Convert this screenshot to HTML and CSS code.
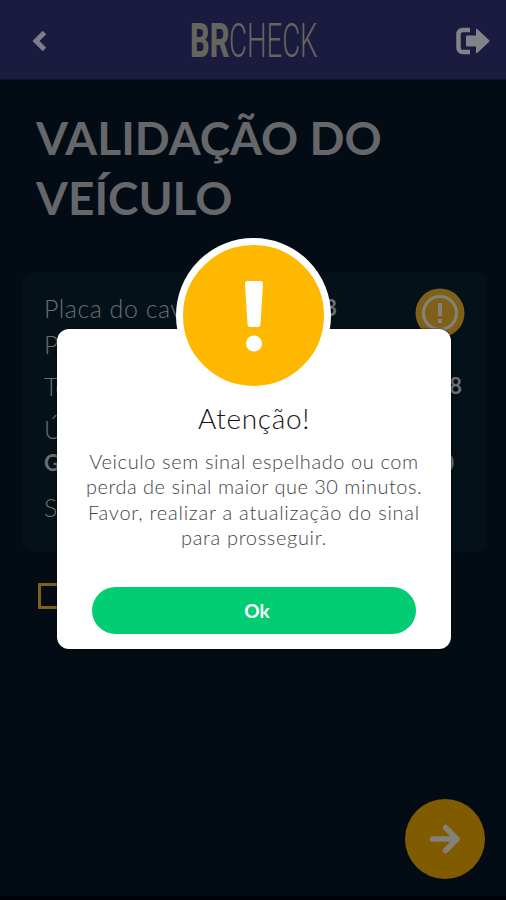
FILE: index.html
```html
<!DOCTYPE html>
<html lang="pt-BR">
<head>
<meta charset="utf-8">
<title>BRCheck</title>
<link rel="stylesheet" href="styles.css">
</head>
<body>
<div class="screen">
  <header class="topbar">
    <svg class="back" width="18" height="24" viewBox="0 0 18 24"><path d="M13.500 3.500 5 12l8.500 8.500" fill="none" stroke="#7d7e88" stroke-width="5"/></svg>
    <div class="logo"><span class="logo-br">BR</span><span class="logo-check">CHECK</span></div>
    <svg class="exit" width="36" height="28" viewBox="0 0 36 28"><path d="M15 3H7.500a4 4 0 0 0-4 4v14a4 4 0 0 0 4 4H15" fill="none" stroke="#82828a" stroke-width="4.500"/><path d="M11 9.500q0-1 1-1h9V3q0-2 1.500-.8L34 13q1 1 0 2L22.500 25.800Q21 27 21 25v-5.500h-9q-1 0-1-1z" fill="#82828a"/></svg>
  </header>
  <main class="content">
    <h1 class="title">VALIDAÇÃO DO<br>VEÍCULO</h1>
    <section class="card">
      <div class="row row-plate"><span>Placa do cav</span><b class="plate-end">3</b>
        <svg class="warn" width="50" height="50" viewBox="0 0 50 50"><circle cx="25" cy="25" r="24.500" fill="#806018"/><circle cx="25" cy="25" r="16.500" fill="none" stroke="#85827b" stroke-width="3"/><path d="M25 15v13M25 31v4" stroke="#85827b" stroke-width="4"/></svg>
      </div>
      <div class="row row-p">P</div>
      <div class="row row-t"><span>Te</span><b>8</b></div>
      <div class="row row-u">Ú</div>
      <div class="row row-g"><b>G</b><b>0</b></div>
      <div class="row row-s">S</div>
    </section>
    <div class="checkbox"></div>
  </main>
  <button class="next"><svg width="32" height="32" viewBox="0 0 32 32"><path d="M3.500 16H28M16.500 4.500 28 16 16.500 27.500" fill="none" stroke="#858078" stroke-width="5.500" stroke-linecap="round" stroke-linejoin="round"/></svg></button>
  <div class="modal">
    <div class="badge"><svg width="30" height="76" viewBox="0 0 30 76"><path d="M6 5.500Q6 3 8.500 3h13Q24 3 24 5.500L21.500 46.500Q21.300 49 19 49h-8Q8.700 49 8.500 46.500z" fill="#fff"/><circle cx="15" cy="65.500" r="8" fill="#fff"/></svg></div>
    <h2 class="modal-title">Atenção!</h2>
    <p class="message"><span class="m1">Veiculo sem sinal espelhado ou com</span><span class="m2">perda de sinal maior que 30 minutos.</span><span class="m3">Favor, realizar a atualização do sinal</span><span class="m4">para prosseguir.</span></p>
    <button class="ok">Ok</button>
  </div>
</div>
</body>
</html>
```
FILE: styles.css
```css
* { box-sizing: border-box; }
body { margin: 0; background: #030b14; font-family: Lato, "Open Sans", sans-serif; }
button { border: 0; padding: 0; font-family: inherit; }
.screen { position: relative; height: 900px; overflow: hidden; border-bottom: 4px solid #010208; }
.topbar { height: 80px; background: #1a1b3e; border-bottom: 1px solid #10112b; display: flex; align-items: center; justify-content: space-between; padding: 3px 15px 0 31px; }
.logo { width: 128px; height: 60px; display: flex; align-items: center; color: #64655f; font-family: Roboto, sans-serif; font-size: 48px; line-height: 60px; margin-left: 4px; white-space: nowrap; }
.logo span { flex: none; transform-origin: left center; }
.logo-br { width: 39px; font-weight: 800; transform: scaleX(.64); }
.logo-check { font-weight: 300; transform: scaleX(.575); }
.content { padding: 28px 19px 0 22px; }
.title { margin: 0; padding-left: 14px; font-size: 46px; line-height: 60px; font-weight: 700; color: #66676a; white-space: nowrap; }
.card { height: 280px; margin-top: 44px; background: #051119; border-radius: 10px; padding: 18px 25px 0 22px; color: #696e73; font-size: 25px; font-weight: 300; }
.row { display: flex; justify-content: space-between; line-height: 36px; height: 36px; }
.row b { font-weight: 700; font-size: 22px; }
.row-plate { justify-content: flex-start; letter-spacing: .5px; }
.plate-end { margin-left: 141px; }
.warn { margin: -2px 0 0 auto; flex: none; position: relative; left: 3px; }
.row-t { margin-top: 6px; }
.row-u { margin-top: 7px; }
.row-g { margin-top: -2px; padding-right: 8px; }
.row-s { margin-top: 8px; }
.checkbox { width: 26px; height: 26px; margin: 31px 0 0 16px; border: 3px solid #806018; }
.next { position: absolute; right: 21px; bottom: 17px; width: 80px; height: 80px; border-radius: 50%; background: #805b00; display: flex; align-items: center; justify-content: center; }
.modal { position: absolute; left: 57px; top: 329px; width: 394px; height: 320px; border-radius: 12px; background: #fff; display: flex; flex-direction: column; align-items: center; box-shadow: 0 0 2px #000; }
.badge { width: 155px; height: 155px; margin: -91px 1px 0 0; flex: none; border: 7.500px solid #fff; border-radius: 50%; background: #ffb800; display: flex; align-items: center; justify-content: center; }
.modal-title { margin: 7px 0 0; font-size: 28px; line-height: 36px; font-weight: 300; letter-spacing: .7px; color: #151515; white-space: nowrap; }
.message { margin: 13px 0 0; display: flex; flex-direction: column; align-items: center; font-size: 20px; line-height: 25.300px; font-weight: 300; color: #444; white-space: nowrap; }
.m1 { letter-spacing: .6px; }
.m2 { letter-spacing: .5px; }
.m3 { letter-spacing: .75px; }
.m4 { letter-spacing: .65px; }
.ok { width: 324px; height: 47px; margin-top: 37px; padding-left: 6px; border-radius: 24px; background: #03cd72; color: #fff; font-size: 19px; font-weight: 700; }
```
